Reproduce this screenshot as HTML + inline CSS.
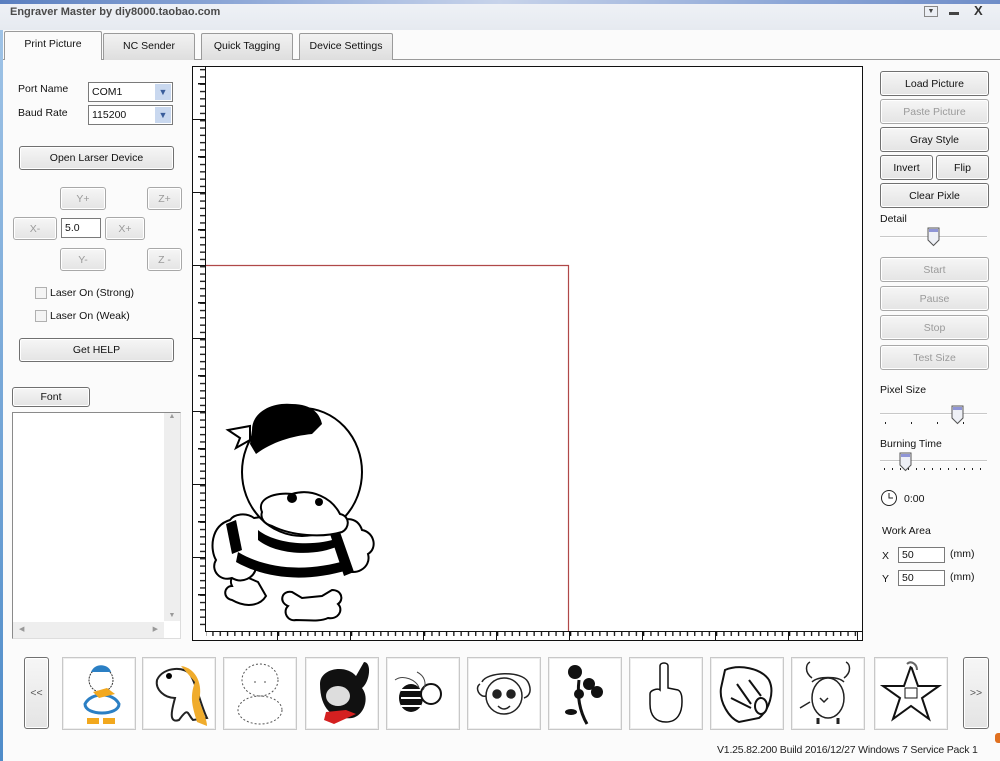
<!DOCTYPE html>
<html><head><meta charset="utf-8"><style>
*{box-sizing:border-box;margin:0;padding:0}
body{width:1000px;height:761px;overflow:hidden;background:#fbfbfb;font-family:"Liberation Sans",sans-serif;font-size:10.5px;color:#111;position:relative}
.a{position:absolute;white-space:nowrap}
.btn{position:absolute;border:1px solid #707070;border-radius:3px;background:linear-gradient(#f6f6f6,#e4e4e4);text-align:center;font-size:10.5px;color:#111;display:flex;align-items:center;justify-content:center;box-shadow:inset 0 0 0 1px #fff}
.dis{color:#9a9a9a;border-color:#a8a8a8}
.tab{position:absolute;top:33px;height:27px;border:1px solid #9a9a9a;border-bottom:none;background:linear-gradient(#f2f2f2,#dedede);text-align:center;line-height:24px;font-size:10.5px;border-radius:2px 2px 0 0}
.thumb{position:absolute;top:657px;width:74px;height:73px;border:1px solid #c8c8c8;background:#fff;box-shadow:inset 0 0 0 1px #eee}
.inp{position:absolute;background:#fff;border:1px solid #7a7a7a;font-size:10.5px;padding-left:3px;line-height:16px}
.cb{position:absolute;width:12px;height:12px;border:1px solid #b0b0b0;background:#f4f4f4}
</style></head><body>
<div class="a" style="left:0;top:0;width:1000px;height:4px;background:linear-gradient(90deg,#5a7fc0,#9cb3dd 30%,#c7d3ea 50%,#8aa5d6 80%,#6e8dc8)"></div>
<div class="a" style="left:0;top:4px;width:1000px;height:26px;background:linear-gradient(#eef1f6,#e6eaf0)"></div>
<div class="a" style="left:10px;top:6px;font-weight:bold;color:#4a4a4a;font-size:11px">Engraver Master by diy8000.taobao.com</div>
<div class="a" style="left:924px;top:6px;width:14px;height:11px;border:1px solid #888;font-size:7px;text-align:center;line-height:9px;color:#444">▼</div>
<div class="a" style="left:949px;top:12px;width:10px;height:3px;background:#444"></div>
<div class="a" style="left:974px;top:3px;font-size:13px;font-weight:bold;color:#333">X</div>
<div class="a" style="left:0;top:59px;width:1000px;height:1px;background:#9a9a9a"></div>
<div class="a" style="left:0;top:30px;width:3px;height:731px;background:linear-gradient(#9fc3e6,#4f8cc9)"></div>
<div class="tab" style="left:4px;width:98px;top:31px;height:29px;background:#fbfbfb">Print Picture</div>
<div class="tab" style="left:103px;width:92px">NC Sender</div>
<div class="tab" style="left:201px;width:92px">Quick Tagging</div>
<div class="tab" style="left:299px;width:94px">Device Settings</div>

<div class="a" style="left:18px;top:83px">Port Name</div>
<div class="inp" style="left:88px;top:82px;width:85px;height:20px;line-height:18px">COM1</div>
<div class="a" style="left:155px;top:84px;width:16px;height:16px;background:#c9d8ef;color:#3a5d9a;font-size:9px;text-align:center;line-height:16px">▼</div>
<div class="a" style="left:18px;top:107px">Baud Rate</div>
<div class="inp" style="left:88px;top:105px;width:85px;height:20px;line-height:18px">115200</div>
<div class="a" style="left:155px;top:107px;width:16px;height:16px;background:#c9d8ef;color:#3a5d9a;font-size:9px;text-align:center;line-height:16px">▼</div>
<div class="btn" style="left:19px;top:146px;width:155px;height:24px">Open Larser Device</div>
<div class="btn dis" style="left:60px;top:187px;width:46px;height:23px">Y+</div>
<div class="btn dis" style="left:147px;top:187px;width:35px;height:23px">Z+</div>
<div class="btn dis" style="left:13px;top:217px;width:44px;height:23px">X-</div>
<div class="inp" style="left:61px;top:218px;width:40px;height:20px;line-height:18px">5.0</div>
<div class="btn dis" style="left:105px;top:217px;width:40px;height:23px">X+</div>
<div class="btn dis" style="left:60px;top:248px;width:46px;height:23px">Y-</div>
<div class="btn dis" style="left:147px;top:248px;width:35px;height:23px">Z -</div>
<div class="cb" style="left:35px;top:287px"></div><div class="a" style="left:50px;top:287px">Laser On (Strong)</div>
<div class="cb" style="left:35px;top:310px"></div><div class="a" style="left:50px;top:310px">Laser On (Weak)</div>
<div class="btn" style="left:19px;top:338px;width:155px;height:24px">Get HELP</div>
<div class="btn" style="left:12px;top:387px;width:78px;height:20px">Font</div>
<div class="a" style="left:12px;top:412px;width:169px;height:227px;border:1px solid #8a8a8a;border-right-color:#ddd;border-bottom-color:#ddd;background:#fff"></div>
<div class="a" style="left:164px;top:413px;width:16px;height:208px;background:#eeeeee;color:#999;font-size:7px;text-align:center">▲<div style="position:absolute;bottom:2px;width:16px">▼</div></div>
<div class="a" style="left:13px;top:622px;width:151px;height:16px;background:#eeeeee;color:#999;font-size:7px;line-height:16px;padding-left:6px">◀<span style="position:absolute;right:6px">▶</span></div>

<svg class="a" style="left:192px;top:66px" width="671" height="575">
<defs>
<pattern id="lv" width="14" height="7.3" patternUnits="userSpaceOnUse" y="0"><rect x="8" y="3" width="5" height="1.3" fill="#111"/></pattern>
<pattern id="bh" width="7.3" height="14" patternUnits="userSpaceOnUse" x="13" y="566"><rect x="0" y="0" width="1.3" height="4" fill="#111"/></pattern>
</defs>
<rect x="0.5" y="0.5" width="670" height="574" fill="#fff" stroke="#111"/>
<rect x="13" y="1" width="1" height="564" fill="#111"/>
<rect x="1" y="2" width="12" height="562" fill="url(#lv)"/>
<rect x="13" y="565" width="657" height="1" fill="#111"/>
<rect x="14" y="566" width="655" height="5" fill="url(#bh)"/>
<g fill="#111">
<rect x="1" y="53" width="12" height="1"/><rect x="1" y="126" width="12" height="1"/><rect x="1" y="199" width="12" height="1"/><rect x="1" y="272" width="12" height="1"/><rect x="1" y="345" width="12" height="1"/><rect x="1" y="418" width="12" height="1"/><rect x="1" y="491" width="12" height="1"/>
<rect x="6" y="17" width="7" height="1.5"/><rect x="6" y="90" width="7" height="1.5"/><rect x="6" y="163" width="7" height="1.5"/><rect x="6" y="236" width="7" height="1.5"/><rect x="6" y="309" width="7" height="1.5"/><rect x="6" y="382" width="7" height="1.5"/><rect x="6" y="455" width="7" height="1.5"/><rect x="6" y="528" width="7" height="1.5"/>
<rect x="85" y="566" width="1" height="8"/><rect x="158" y="566" width="1" height="8"/><rect x="231" y="566" width="1" height="8"/><rect x="304" y="566" width="1" height="8"/><rect x="377" y="566" width="1" height="8"/><rect x="450" y="566" width="1" height="8"/><rect x="523" y="566" width="1" height="8"/><rect x="596" y="566" width="1" height="8"/><rect x="665" y="566" width="1" height="8"/>
</g>
<path d="M14 199.5H376.5V565" fill="none" stroke="#b04848" stroke-width="1.2"/>
<g transform="translate(-192,-66)" stroke="#000" stroke-width="2" fill="#fff">
<path d="M296 620c-8 2-14-8-8-14c-10-4-6-16 4-14l10 6 20-2 10-6c10 0 12 10 6 14c6 6 0 16-10 14c-8 4-20 2-32 2z"/>
<path d="M232 600c-10-2-8-14 0-14c-4-8 4-14 12-10l14 6 8 14c-6 10-20 12-34 4z"/>
<path d="M230 520c-20 6-20 30-14 40c-6 10 4 22 16 18c10 6 22 0 24-10c20 10 60 10 86 0c12 10 30 0 26-14c10-6 6-22-6-24c-4-12-16-14-24-6c-24-8-60-10-84-6c-8-6-20-4-24 2z"/>
<ellipse cx="302" cy="472" rx="60" ry="64"/>
<path d="M262 512c-6-14 14-20 30-18c20-6 40 4 48 20c10 2 10 14 2 18c-20 6-50 4-70-6c-8-2-12-8-10-14z"/>
</g>
<g transform="translate(-192,-66)" fill="#000">
<path d="M252 430c0-18 20-28 40-26c20 0 28 10 30 20l-10 10c-20 2-40 8-56 20l-6-10z"/>
<path d="M228 430l22-4 0 14-14 8 4-10z" fill="#fff" stroke="#000" stroke-width="2"/>
<circle cx="292" cy="498" r="5"/><circle cx="319" cy="502" r="4"/>
<path d="M226 524l10-4 6 30-10 4z"/><path d="M258 530c20 16 60 16 80 8l0 8c-20 10-60 10-80-6z"/>
<path d="M238 552c30 18 70 20 110 8l0 10c-40 12-80 10-112-8z"/>
<path d="M330 534l10-2 14 40-10 4z"/>
</g>
</svg>

<div class="btn" style="left:880px;top:71px;width:109px;height:25px">Load Picture</div>
<div class="btn dis" style="left:880px;top:99px;width:109px;height:25px">Paste Picture</div>
<div class="btn" style="left:880px;top:127px;width:109px;height:25px">Gray Style</div>
<div class="btn" style="left:880px;top:155px;width:53px;height:25px">Invert</div>
<div class="btn" style="left:936px;top:155px;width:53px;height:25px">Flip</div>
<div class="btn" style="left:880px;top:183px;width:109px;height:25px">Clear Pixle</div>
<div class="a" style="left:880px;top:213px">Detail</div>
<div class="a" style="left:880px;top:236px;width:107px;height:2px;background:#c8c8c8;border-bottom:1px solid #fff"></div>
<svg class="a" style="left:927px;top:227px" width="13" height="20"><path d="M1 1h11v12l-5.5 5.5L1 13z" fill="#eef0f6" stroke="#555"/><rect x="2" y="2" width="9" height="3" fill="#8f95d6"/></svg>
<div class="btn dis" style="left:880px;top:257px;width:109px;height:25px">Start</div>
<div class="btn dis" style="left:880px;top:286px;width:109px;height:25px">Pause</div>
<div class="btn dis" style="left:880px;top:315px;width:109px;height:25px">Stop</div>
<div class="btn dis" style="left:880px;top:345px;width:109px;height:25px">Test Size</div>
<div class="a" style="left:880px;top:384px">Pixel Size</div>
<div class="a" style="left:880px;top:413px;width:107px;height:2px;background:#c8c8c8;border-bottom:1px solid #fff"></div>
<svg class="a" style="left:951px;top:405px" width="13" height="20"><path d="M1 1h11v12l-5.5 5.5L1 13z" fill="#eef0f6" stroke="#555"/><rect x="2" y="2" width="9" height="3" fill="#8f95d6"/></svg>
<div class="a" style="left:885px;top:422px;width:100px;height:2px;background:repeating-linear-gradient(90deg,#222 0 1px,transparent 1px 26px)"></div>
<div class="a" style="left:880px;top:438px">Burning Time</div>
<div class="a" style="left:880px;top:460px;width:107px;height:2px;background:#c8c8c8;border-bottom:1px solid #fff"></div>
<svg class="a" style="left:899px;top:452px" width="13" height="20"><path d="M1 1h11v12l-5.5 5.5L1 13z" fill="#eef0f6" stroke="#555"/><rect x="2" y="2" width="9" height="3" fill="#8f95d6"/></svg>
<div class="a" style="left:884px;top:468px;width:102px;height:2px;background:repeating-linear-gradient(90deg,#222 0 1px,transparent 1px 8px)"></div>
<svg class="a" style="left:880px;top:489px" width="18" height="18"><circle cx="9" cy="9" r="7.5" fill="#fff" stroke="#222"/><path d="M9 4v5h4" fill="none" stroke="#222"/></svg>
<div class="a" style="left:904px;top:493px">0:00</div>
<div class="a" style="left:882px;top:525px">Work Area</div>
<div class="a" style="left:882px;top:550px">X</div>
<div class="inp" style="left:898px;top:547px;width:47px;height:16px;line-height:14px">50</div>
<div class="a" style="left:950px;top:548px">(mm)</div>
<div class="a" style="left:882px;top:573px">Y</div>
<div class="inp" style="left:898px;top:570px;width:47px;height:16px;line-height:14px">50</div>
<div class="a" style="left:950px;top:571px">(mm)</div>

<div class="btn" style="left:24px;top:657px;width:25px;height:72px;color:#555">&lt;&lt;</div>
<div class="btn" style="left:963px;top:657px;width:26px;height:72px;color:#555">&gt;&gt;</div>
<div class="thumb" style="left:62px"><svg width="72" height="71"><circle cx="38" cy="22" r="12" fill="#fff" stroke="#333" stroke-dasharray="2 1"/><path d="M28 14c4-10 18-8 20 0z" fill="#2b7fc4"/><path d="M22 46c6-12 28-12 34 0c0 12-34 12-34 0z" fill="#fff" stroke="#2b7fc4" stroke-width="3"/><path d="M30 34l14-4 8 6-16 4z" fill="#f2a81e"/><path d="M24 60h12v6H24zM40 60h12v6H40z" fill="#f2a81e"/></svg></div>
<div class="thumb" style="left:142px"><svg width="72" height="71"><path d="M14 22c6-14 30-14 34-4c6 10 10 30 16 42l-14 2c-6-6-4-14-14 0c-12 4-6-14-4-22c-10 0-20-8-18-18z" fill="#fff" stroke="#222" stroke-width="2"/><path d="M38 8c16 2 22 20 18 34c4 12 8 20 8 26l-10-4c-4-14-8-24-2-40z" fill="#f0ac2c"/><circle cx="26" cy="18" r="3"/></svg></div>
<div class="thumb" style="left:223px"><svg width="72" height="71" fill="none" stroke="#555" stroke-dasharray="2 2"><ellipse cx="36" cy="22" rx="18" ry="16"/><ellipse cx="36" cy="52" rx="22" ry="14"/><path d="M30 24h2M40 24h2"/></svg></div>
<div class="thumb" style="left:305px"><svg width="72" height="71"><path d="M14 26c0-16 26-20 36-8l8-14c8 0 6 20-2 26c8 10 2 28-10 30c-16 2-32-6-32-34z" fill="#111"/><ellipse cx="32" cy="38" rx="12" ry="10" fill="#ddd"/><path d="M20 54l20-2 10 4-22 10-10-4z" fill="#d42020"/></svg></div>
<div class="thumb" style="left:386px"><svg width="72" height="71"><ellipse cx="24" cy="40" rx="12" ry="14" fill="#111"/><path d="M14 32h20M14 40h22M14 48h20" stroke="#fff" stroke-width="2"/><circle cx="44" cy="36" r="10" fill="#fff" stroke="#111" stroke-width="2"/><path d="M8 22c8-6 22 0 24 8M30 14c8 4 10 12 6 18" fill="none" stroke="#444"/></svg></div>
<div class="thumb" style="left:467px"><svg width="72" height="71" fill="none" stroke="#222" stroke-width="1.5"><circle cx="36" cy="38" r="18"/><path d="M14 24c4-10 40-12 46 0c4 8 2 14-4 16M12 26c-6 4 0 14 6 12"/><circle cx="29" cy="36" r="4" fill="#222"/><circle cx="43" cy="36" r="4" fill="#222"/><path d="M30 48c4 4 8 4 12 0"/></svg></div>
<div class="thumb" style="left:548px"><svg width="72" height="71" fill="#111"><circle cx="26" cy="14" r="7"/><circle cx="40" cy="26" r="6"/><circle cx="48" cy="34" r="6"/><circle cx="30" cy="36" r="5"/><path d="M30 22c-2 16 0 30 8 44" fill="none" stroke="#111" stroke-width="3"/><ellipse cx="22" cy="54" rx="6" ry="3"/></svg></div>
<div class="thumb" style="left:629px"><svg width="72" height="71" fill="#fff" stroke="#111" stroke-width="1.5"><path d="M30 8c0-4 8-4 8 0v22l10 2c4 2 4 8 4 12c0 10-4 20-16 20c-10 0-16-6-16-18v-10c0-4 8-6 10-4z"/></svg></div>
<div class="thumb" style="left:710px"><svg width="72" height="71" fill="#fff" stroke="#111" stroke-width="2"><path d="M14 12c14-6 36-2 44 10c6 12 0 30-10 38l-20 4c-10-4-20-20-18-34z"/><path d="M26 26l14 20M38 22l12 16M20 40l20 10"/><ellipse cx="50" cy="48" rx="6" ry="8"/></svg></div>
<div class="thumb" style="left:791px"><svg width="72" height="71" fill="none" stroke="#222" stroke-width="1.5"><path d="M20 20c-8-6-6-14-2-16M52 20c8-6 6-14 2-16"/><ellipse cx="36" cy="40" rx="16" ry="20"/><path d="M20 24c6-6 26-6 32 0M8 50l10-6M28 40l4 4 4-4"/><path d="M26 60v6M46 60v6" stroke-width="3"/></svg></div>
<div class="thumb" style="left:874px"><svg width="72" height="71" fill="#fff" stroke="#111" stroke-width="2"><path d="M36 8l7 20h21l-17 12 7 21-18-13-18 13 7-21L8 28h21z"/><path d="M32 6c4-4 10 0 10 6" stroke="#666"/><path d="M30 30h12v10H30z" stroke-width="1"/></svg></div>

<div class="a" style="left:717px;top:744px;font-size:10.5px;color:#222;letter-spacing:-0.2px">V1.25.82.200 Build 2016/12/27 Windows 7 Service Pack 1</div>
<div class="a" style="left:995px;top:733px;width:5px;height:10px;background:#e07020;border-radius:3px 0 0 3px"></div>
</body></html>
